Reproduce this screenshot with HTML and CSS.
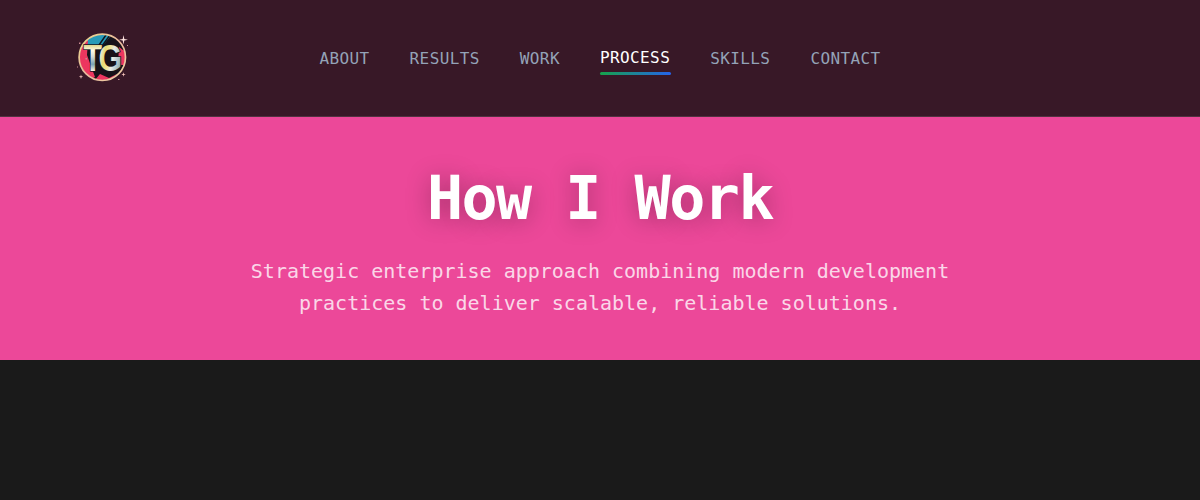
FILE: index.html
```html
<!DOCTYPE html>
<html lang="en">
<head>
<meta charset="utf-8">
<title>How I Work</title>
<link rel="stylesheet" href="styles.css">
</head>
<body>
<header class="header">
  <a class="logo" href="#">
    <svg viewBox="0 0 64 64" width="64" height="64" role="img" aria-label="TG">
      <defs>
        <linearGradient id="ring" x1="0" y1="0" x2="1" y2="1"><stop offset="0" stop-color="#e8d98c"/><stop offset=".5" stop-color="#e9b79c"/><stop offset="1" stop-color="#f0d4a6"/></linearGradient>
        <linearGradient id="chrome" gradientUnits="userSpaceOnUse" x1="0" y1="-25" x2="0" y2="0"><stop offset="0" stop-color="#e3d994"/><stop offset=".2" stop-color="#fffbe8"/><stop offset=".45" stop-color="#d5dcd8"/><stop offset=".75" stop-color="#7ba4b6"/><stop offset="1" stop-color="#f2efe2"/></linearGradient>
        <linearGradient id="gold" gradientUnits="userSpaceOnUse" x1="20" y1="-16" x2="46" y2="-10"><stop offset="0" stop-color="#e7ebe7"/><stop offset=".2" stop-color="#e7db72"/><stop offset=".42" stop-color="#f0e69b"/><stop offset=".6" stop-color="#e7ebe7"/><stop offset="1" stop-color="#8ba9b5"/></linearGradient>
        <clipPath id="disc"><circle cx="32.3" cy="32.3" r="23"/></clipPath>
      </defs>
      <g clip-path="url(#disc)">
        <rect width="64" height="64" fill="#181219"/>
        <path d="M8 19 25 8H43L30 24H8z" fill="#279ab8"/>
        <path d="M8 21 18 15 17 30 25 52 18 56 7 42zM49 22 57 28V40H48zM25 55l5-6 9 4 8-4-9 8z" fill="#ec365f"/>
        <path d="M36 10 29 20M40 10 32 21M44 12 35 21" stroke="#10161d" stroke-width="1.4"/>
      </g>
      <circle cx="32.3" cy="32.3" r="23.2" fill="none" stroke="url(#ring)" stroke-width="1.7"/>
      <text class="monogram" transform="translate(13.6 45.5) scale(.82 1)"><tspan fill="url(#chrome)">T</tspan><tspan dx="-4.5" fill="url(#gold)">G</tspan></text>
      <path d="M53.5 10l.8 4 3.7.8-3.7.8-.8 4-.8-4-3.7-.8 3.7-.8z" fill="#ffe3df"/>
      <path d="M11 49.5l.5 1.7 1.7.5-1.7.5-.5 1.7-.5-1.7-1.7-.5 1.7-.5zM53.5 47.3l.5 1.7 1.7.5-1.7.5-.5 1.7-.5-1.7-1.7-.5 1.7-.5z" fill="#f6c4bc"/>
      <path d="M9 17.5h1.5v1.5H9zM7 41.5h1v1H7zM48 54h1.5v1H48zM57 20h1v1h-1zM15.5 33h1.5v1.5h-1.5z" fill="#c98991"/>
    </svg>
  </a>
  <nav class="nav">
    <a class="link" href="#">ABOUT</a>
    <a class="link" href="#">RESULTS</a>
    <a class="link" href="#">WORK</a>
    <a class="link active" href="#">PROCESS</a>
    <a class="link" href="#">SKILLS</a>
    <a class="link" href="#">CONTACT</a>
  </nav>
</header>
<main>
  <section class="hero">
    <h1 class="title">How I Work</h1>
    <p class="subtitle">Strategic enterprise approach combining modern development practices to deliver scalable, reliable solutions.</p>
  </section>
</main>
</body>
</html>
```
FILE: styles.css
```css
* { box-sizing: border-box; }
body {
  margin: 0;
  background: #1a1a1a;
  font-family: "DejaVu Sans Mono", monospace;
}
.header {
  display: grid;
  grid-template-columns: 250px 700px 250px;
  align-items: center;
  height: 117px;
  background: #381827;
  border-bottom: 1px solid #513340;
}
.logo {
  display: flex;
  padding: 0 0 2px 70px;
}
.monogram {
  font: 700 37px "Liberation Sans", sans-serif;
  stroke: #17141b;
  stroke-width: 1.6px;
  paint-order: stroke;
}
.nav {
  display: flex;
  justify-content: center;
  gap: 40px;
  padding-top: 2px;
}
.link {
  padding: 4px 0;
  font-size: 16px;
  line-height: 24px;
  letter-spacing: 0.025em;
  color: #94a3b8;
  text-decoration: none;
}
.active {
  position: relative;
  top: -1px;
  color: #fff;
}
.active::after {
  content: "";
  position: absolute;
  right: -0.5px;
  bottom: -1px;
  left: 0;
  height: 3px;
  border-radius: 2px;
  background: linear-gradient(90deg, #16a34a, #2563eb);
}
.hero {
  height: 243px;
  padding-top: 48px;
  background: #ec4899;
  text-align: center;
}
.title {
  margin: 0 0 24px;
  font-size: 60px;
  font-weight: 700;
  line-height: 66px;
  letter-spacing: -0.025em;
  color: #fff;
  text-shadow: 0 2px 24px rgba(0, 0, 0, 0.3);
}
.subtitle {
  max-width: 768px;
  margin: 0 auto;
  font-size: 20px;
  line-height: 32px;
  color: rgba(255, 255, 255, 0.8);
}
```
